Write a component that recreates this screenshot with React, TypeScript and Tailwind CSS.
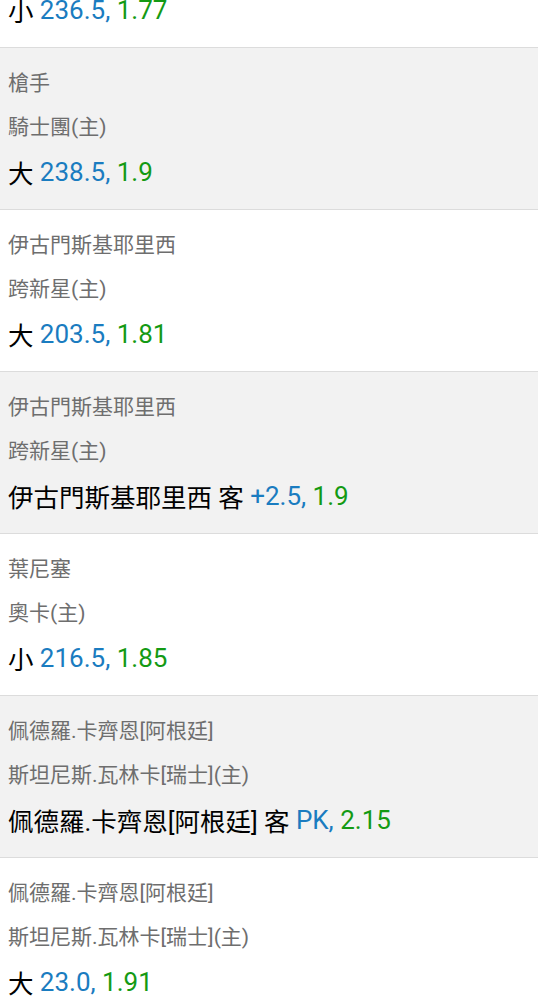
import React from 'react';

type Bet = {
  home?: string;
  away?: string;
  pick: string;
  line: string;
  odds: string;
};

const bets: Bet[] = [
  { pick: '小', line: '236.5,', odds: '1.77' },
  { home: '槍手', away: '騎士團(主)', pick: '大', line: '238.5,', odds: '1.9' },
  { home: '伊古門斯基耶里西', away: '跨新星(主)', pick: '大', line: '203.5,', odds: '1.81' },
  { home: '伊古門斯基耶里西', away: '跨新星(主)', pick: '伊古門斯基耶里西 客', line: '+2.5,', odds: '1.9' },
  { home: '葉尼塞', away: '奧卡(主)', pick: '小', line: '216.5,', odds: '1.85' },
  { home: '佩德羅.卡齊恩[阿根廷]', away: '斯坦尼斯.瓦林卡[瑞士](主)', pick: '佩德羅.卡齊恩[阿根廷] 客', line: 'PK,', odds: '2.15' },
  { home: '佩德羅.卡齊恩[阿根廷]', away: '斯坦尼斯.瓦林卡[瑞士](主)', pick: '大', line: '23.0,', odds: '1.91' },
];

function BetLine({ bet }: { bet: Bet }) {
  return (
    <div className="h-[51px] text-[25.5px] leading-[51px] text-black whitespace-nowrap overflow-hidden">
      {bet.pick}{' '}
      <span className="text-[26px] leading-none align-[2px]">
        <span className="text-[#1a7cc0]">{bet.line}</span>{' '}
        <span className="text-[#149a14]">{bet.odds}</span>
      </span>
    </div>
  );
}

export default function App() {
  return (
    <div className="w-[538px] h-[1000px] overflow-hidden bg-white font-['Roboto','Noto_Sans_CJK_TC',sans-serif]">
      {bets.map((bet, i) => (
        <div
          key={i}
          className={
            (i % 2 === 1 ? 'bg-[#f2f2f2] ' : 'bg-white ') +
            (i === 0 ? '-mt-[13px] ' : 'pt-[13px] ') +
            'pl-[8px] pb-[9px] border-b border-[#dcdcdc]'
          }
        >
          {bet.home && (
            <>
              <div className="h-[44px] text-[21px] leading-[44px] text-[#6e6e6e] whitespace-nowrap">{bet.home}</div>
              <div className="h-[44px] text-[21px] leading-[44px] text-[#6e6e6e] whitespace-nowrap">{bet.away}</div>
            </>
          )}
          <BetLine bet={bet} />
        </div>
      ))}
    </div>
  );
}
